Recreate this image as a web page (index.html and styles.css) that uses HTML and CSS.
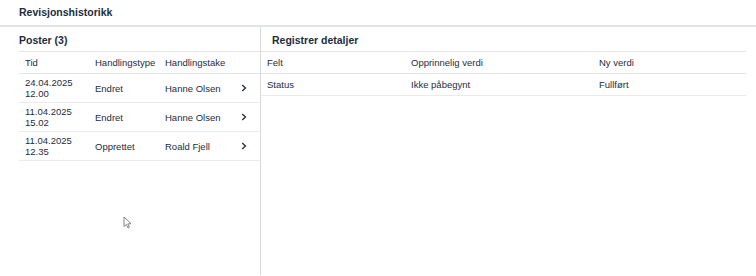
FILE: index.html
```html
<!DOCTYPE html>
<html lang="no">
<head>
<meta charset="utf-8">
<link rel="stylesheet" href="styles.css">
</head>
<body>
<div class="page">
  <header class="topbar">Revisjonshistorikk</header>
  <main class="split">
    <section class="pane left">
      <h2 class="pane-title">Poster (3)</h2>
      <div class="ltable">
        <div class="lrow lhead">
          <div>Tid</div><div>Handlingstype</div><div>Handlingstake</div><div></div>
        </div>
        <div class="lrow">
          <div>24.04.2025<br>12.00</div><div>Endret</div><div>Hanne Olsen</div>
          <div class="chev"><svg width="6" height="8" viewBox="0 0 6 8"><path d="M1.2 1 L4.5 4 L1.2 7" fill="none" stroke="#1d2d3e" stroke-width="1.3"/></svg></div>
        </div>
        <div class="lrow">
          <div>11.04.2025<br>15.02</div><div>Endret</div><div>Hanne Olsen</div>
          <div class="chev"><svg width="6" height="8" viewBox="0 0 6 8"><path d="M1.2 1 L4.5 4 L1.2 7" fill="none" stroke="#1d2d3e" stroke-width="1.3"/></svg></div>
        </div>
        <div class="lrow">
          <div>11.04.2025<br>12.35</div><div>Opprettet</div><div>Roald Fjell</div>
          <div class="chev"><svg width="6" height="8" viewBox="0 0 6 8"><path d="M1.2 1 L4.5 4 L1.2 7" fill="none" stroke="#1d2d3e" stroke-width="1.3"/></svg></div>
        </div>
      </div>
    </section>
    <section class="pane right">
      <h2 class="pane-title rt">Registrer detaljer</h2>
      <div class="rtable">
        <div class="rrow rhead"><div>Felt</div><div>Opprinnelig verdi</div><div>Ny verdi</div></div>
        <div class="rrow"><div>Status</div><div>Ikke påbegynt</div><div>Fullført</div></div>
      </div>
    </section>
  </main>
  <svg class="cursor" width="10" height="14" viewBox="0 0 10 14"><path d="M1 1 L1 10.5 L3.3 8.4 L5 12 L6.4 11.3 L4.8 7.9 L8 7.7 Z" fill="#fff" stroke="#777" stroke-width="0.9" stroke-linejoin="round"/></svg>
</div>
</body>
</html>
```
FILE: styles.css
```css
html, body {
  margin: 0;
  padding: 0;
  background: #fff;
}
body {
  font-family: "Liberation Sans", Arial, sans-serif;
  color: #1d2d3e;
  font-size: 9.5px;
}
.page {
  position: relative;
  width: 756px;
  height: 276px;
  overflow: hidden;
  display: flex;
  flex-direction: column;
}
.topbar {
  height: 27px;
  box-sizing: border-box;
  padding: 0 0 2px 19px;
  display: flex;
  align-items: center;
  font-size: 10.5px;
  font-weight: bold;
  border-bottom: 2px solid #e1e3e5;
}
.split {
  flex: 1;
  display: flex;
}
.pane {
  display: flex;
  flex-direction: column;
}
.left {
  width: 241px;
  padding-left: 19px;
  border-right: 1px solid #d5dadf;
  margin-bottom: 1px;
}
.right {
  flex: 1;
  padding-right: 10px;
}
.pane-title {
  margin: 0;
  height: 25px;
  box-sizing: border-box;
  padding-top: 2px;
  display: flex;
  align-items: center;
  font-size: 10.5px;
  font-weight: bold;
  border-bottom: 1px solid #e5e5e5;
}
.pane-title.rt {
  padding-left: 11px;
}
.lrow {
  display: grid;
  grid-template-columns: 70px 70px 70px 31px;
  align-items: center;
  height: 28px;
  border-bottom: 1px solid #ebebeb;
  line-height: 11px;
}
.lrow > div {
  padding-left: 6px;
}
.lrow.lhead {
  height: 21px;
  border-bottom: 1px solid #e5e5e5;
}
.chev {
  display: flex;
  align-items: center;
  padding-left: 12px !important;
}
.chev svg {
  display: block;
}
.rrow {
  display: grid;
  grid-template-columns: 144px 188px 1fr;
  align-items: center;
  height: 21px;
  border-bottom: 1px solid #ebebeb;
}
.rrow > div {
  padding-left: 6px;
}
.rrow.rhead {
  border-bottom: 1px solid #e5e5e5;
}
.cursor {
  position: absolute;
  left: 123px;
  top: 216px;
}
```
